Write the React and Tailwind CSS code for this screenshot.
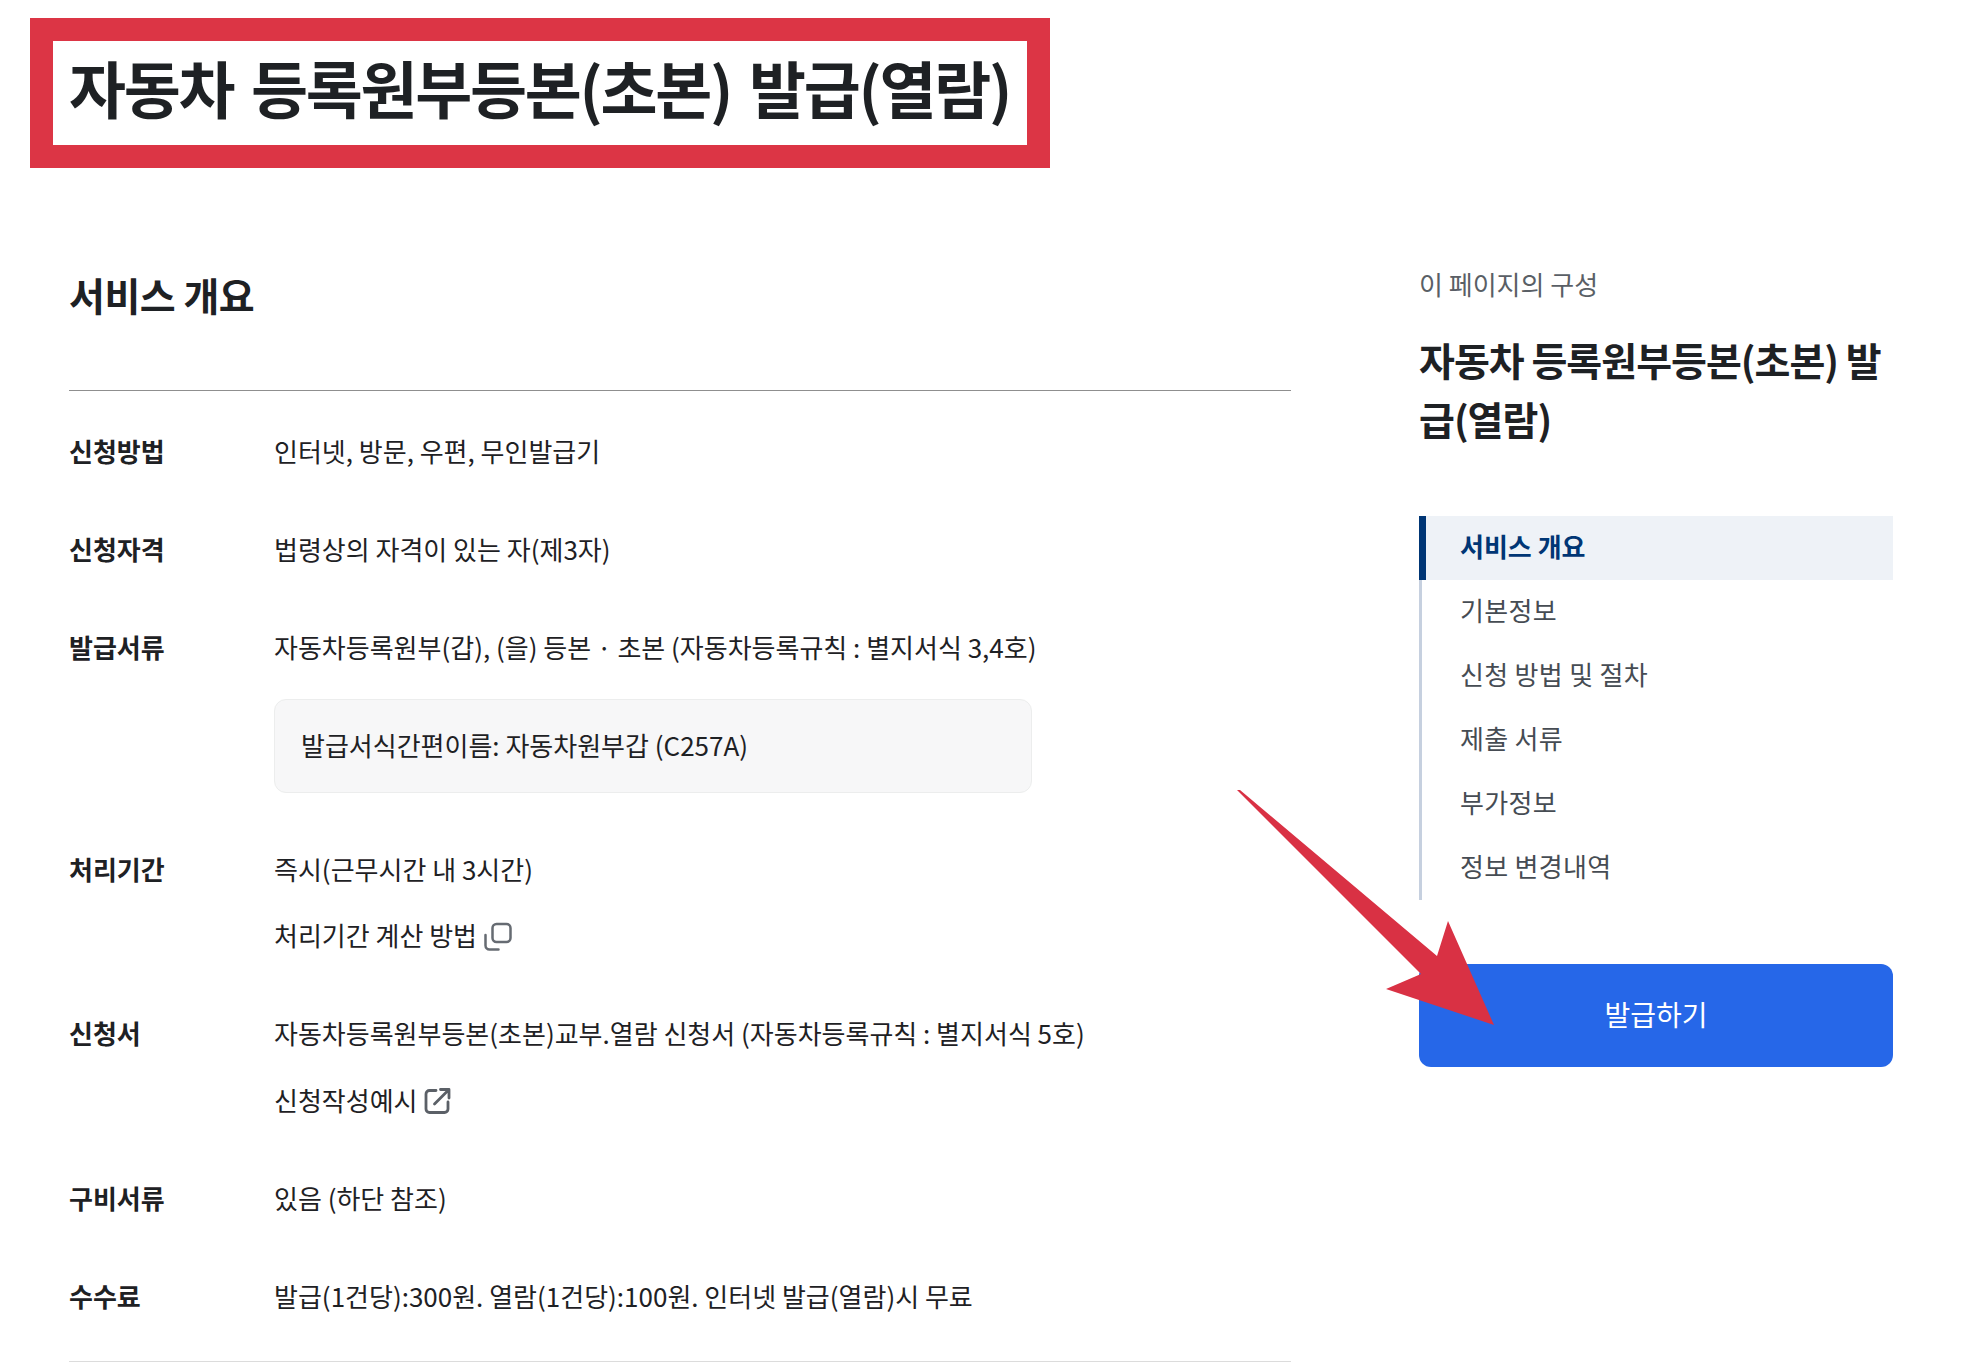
const rows = [
  { label: '신청방법', value: '인터넷, 방문, 우편, 무인발급기' },
  { label: '신청자격', value: '법령상의 자격이 있는 자(제3자)' },
];

const navItems = ['기본정보', '신청 방법 및 절차', '제출 서류', '부가정보', '정보 변경내역'];

function CopyIcon() {
  return (
    <svg className="mt-[3px]" width="30" height="30" viewBox="0 0 30 30" fill="none" stroke="#666b72" strokeWidth="2.5" strokeLinecap="round" strokeLinejoin="round">
      <rect x="9.5" y="2" width="18" height="18" rx="4" />
      <path d="M2.5 13v10.5a4 4 0 0 0 4 4h9" />
    </svg>
  );
}

function LinkIcon() {
  return (
    <svg className="mt-[2px]" width="30" height="30" viewBox="0 0 30 30" fill="none" stroke="#5b6067" strokeWidth="2.8" strokeLinecap="round" strokeLinejoin="round">
      <path d="M14 4.5H7.5a3.5 3.5 0 0 0-3.5 3.5v15a3.5 3.5 0 0 0 3.5 3.5h15a3.5 3.5 0 0 0 3.5-3.5v-7" />
      <path d="M12.5 18 26 4.5M18.5 3.5H27v8.5" />
    </svg>
  );
}

function Label({ children }) {
  return <div className="w-[205px] shrink-0 font-bold text-[#1e2124]">{children}</div>;
}

export default function App() {
  return (
    <div className="relative w-[1962px] h-[1364px] overflow-hidden bg-white text-[26px] leading-[40px] text-[#1e2124] font-['Noto_Sans_CJK_KR',sans-serif]">
      <div className="ml-[30px] mt-[18px] w-[1020px] h-[150px] border-[23px] border-[#dc3545] flex items-center pl-[16px] pb-[12px]">
        <h1 className="text-[62px] leading-none font-bold tracking-[-2.3px] [word-spacing:6px] whitespace-nowrap">자동차 등록원부등본(초본) 발급(열람)</h1>
      </div>

      <div className="flex">
        <main className="ml-[69px] w-[1222px]">
          <h2 className="mt-[101px] h-[50px] text-[39px] leading-[50px] font-bold tracking-[-0.5px]">서비스 개요</h2>
          <div className="mt-[71px] border-t border-[#8f8f8f] pt-[40px]">
            {rows.map((r) => (
              <div key={r.label} className="flex h-[98px]">
                <Label>{r.label}</Label>
                <div>{r.value}</div>
              </div>
            ))}
            <div className="flex">
              <Label>발급서류</Label>
              <div>
                <div className="h-[50px]">자동차등록원부(갑), (을) 등본 · 초본 (자동차등록규칙 : 별지서식 3,4호)</div>
                <div className="mt-[22px] w-[758px] h-[94px] rounded-[12px] border border-[#eceded] bg-[#f7f7f8] flex items-center pl-[26px] pb-[3px]">
                  발급서식간편이름: 자동차원부갑 (C257A)
                </div>
              </div>
            </div>
            <div className="flex mt-[56px]">
              <Label>처리기간</Label>
              <div>
                <div>즉시(근무시간 내 3시간)</div>
                <div className="mt-[26px] flex items-center gap-[6px]">처리기간 계산 방법 <CopyIcon /></div>
              </div>
            </div>
            <div className="flex mt-[58px]">
              <Label>신청서</Label>
              <div>
                <div>자동차등록원부등본(초본)교부.열람 신청서 (자동차등록규칙 : 별지서식 5호)</div>
                <div className="mt-[27px] flex items-center gap-[4px]">신청작성예시 <LinkIcon /></div>
              </div>
            </div>
            <div className="flex mt-[58px]">
              <Label>구비서류</Label>
              <div>있음 (하단 참조)</div>
            </div>
            <div className="flex mt-[58px]">
              <Label>수수료</Label>
              <div>발급(1건당):300원. 열람(1건당):100원. 인터넷 발급(열람)시 무료</div>
            </div>
            <div className="mt-[45px] border-t border-[#dcdcdc]" />
          </div>
        </main>

        <aside className="ml-[128px] w-[474px]">
          <div className="mt-[96px] text-[#5a5f66]">이 페이지의 구성</div>
          <h3 className="mt-[26px] text-[39px] leading-[59px] font-bold tracking-[-1px]">자동차 등록원부등본(초본) 발급(열람)</h3>
          <nav className="mt-[68px]">
            <div className="h-[64px] flex items-center border-l-[7px] border-[#003675] bg-[#eef2f7] pl-[34px] pb-[5px] font-bold text-[#003675]">서비스 개요</div>
            {navItems.map((item) => (
              <div key={item} className="h-[64px] flex items-center border-l-[3px] border-[#c6d0df] pl-[38px] pb-[5px] tracking-[0.3px] text-[#464c53]">{item}</div>
            ))}
          </nav>
          <button className="mt-[64px] w-[474px] h-[103px] rounded-[12px] bg-[#2667e8] pb-[4px] text-white text-[28px]">발급하기</button>
        </aside>
      </div>

      {/* annotation arrow laid over the page */}
      <svg className="absolute left-0 top-0 pointer-events-none" width="1962" height="1364">
        <polygon points="1237,790 1240,790 1437,956 1448,921 1494,1025 1386,989 1421,974" fill="#d93144" />
      </svg>
    </div>
  );
}
